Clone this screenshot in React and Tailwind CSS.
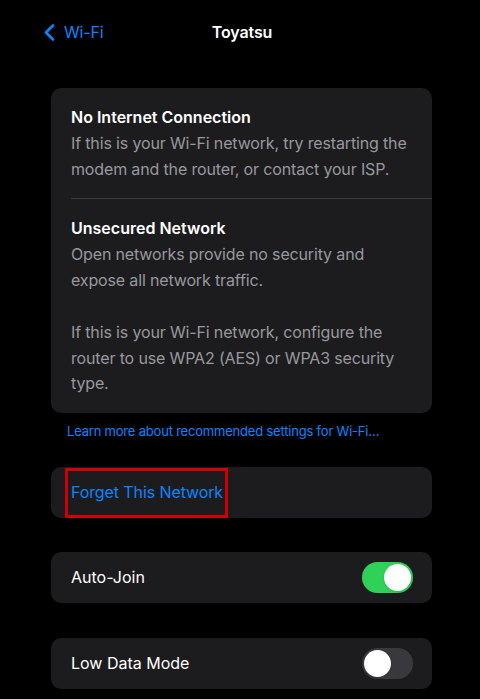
import { useState } from 'react';

const Toggle = ({ on, onChange }) => (
  <button
    onClick={() => onChange(!on)}
    className={`relative w-[51px] h-[31px] rounded-full transition-colors duration-200 ${
      on ? 'bg-[#30d158]' : 'bg-[#39393d]'
    }`}
  >
    <span
      className={`absolute top-[2px] w-[27px] h-[27px] rounded-full bg-white shadow transition-all duration-200 ${
        on ? 'left-[22px]' : 'left-[2px]'
      }`}
    />
  </button>
);

const App = () => {
  const [autoJoin, setAutoJoin] = useState(true);
  const [lowData, setLowData] = useState(false);

  return (
    <div
      className="min-h-[699px] w-[480px] bg-black text-white overflow-hidden"
      style={{ fontFamily: 'Inter, "Noto Sans", sans-serif' }}
    >
      {/* Nav bar */}
      <div className="relative h-[64px] flex items-center">
        <div className="flex items-center pl-[43px] text-[#0a84ff]">
          <svg width="13" height="17" viewBox="0 0 13 17" fill="none">
            <path d="M10 1.5 L3 8.5 L10 15.5" stroke="currentColor" strokeWidth="2.6" strokeLinecap="round" strokeLinejoin="round" />
          </svg>
          <span className="ml-[8px] text-[16px] tracking-[-0.2px] leading-none">Wi-Fi</span>
        </div>
        <div className="absolute left-0 right-0 top-0 h-[64px] flex items-center justify-center pl-[4px] pointer-events-none">
          <span className="text-[16px] tracking-[-0.1px] font-semibold leading-none">Toyatsu</span>
        </div>
      </div>

      <div className="ml-[51px] w-[381px] pt-[24px]">
        {/* Info card */}
        <div className="bg-[#1c1c1e] rounded-[10px] pl-[20px] pt-[15px] pb-[16px]">
          <div className="pr-[16px] pb-[16px]">
            <div className="text-[16px] font-semibold leading-[28px]">No Internet Connection</div>
            <p className="text-[16px] tracking-[-0.15px] leading-[25.5px] text-[#98989f]">
              If this is your Wi-Fi network, try restarting the modem and the router, or contact your ISP.
            </p>
          </div>
          <div className="h-px bg-[#38383a]" />
          <div className="pr-[16px] pt-[15px]">
            <div className="text-[16px] font-semibold leading-[28px]">Unsecured Network</div>
            <p className="text-[16px] tracking-[-0.15px] leading-[25.5px] text-[#98989f]">
              Open networks provide no security and expose all network traffic.
            </p>
            <p className="mt-[27px] text-[16px] tracking-[-0.15px] leading-[25.5px] text-[#98989f]">
              If this is your Wi-Fi network, configure the router to use WPA2 (AES) or WPA3 security type.
            </p>
          </div>
        </div>

        <div className="pl-[16px] pt-[9px] text-[13px] tracking-[-0.2px] leading-[18px] text-[#0a84ff]">
          Learn more about recommended settings for Wi-Fi…
        </div>

        {/* Forget */}
        <div className="relative mt-[27px] h-[51px] bg-[#1c1c1e] rounded-[10px] flex items-center pl-[20px]">
          <span className="text-[16px] tracking-[-0.1px] text-[#0a84ff]">Forget This Network</span>
          <div className="absolute left-[14px] top-[1px] w-[163px] h-[50px] border-[3px] border-[#d10000] pointer-events-none" />
        </div>

        {/* Auto-Join */}
        <div className="mt-[34px] h-[51px] bg-[#1c1c1e] rounded-[10px] flex items-center justify-between pl-[20px] pr-[19px]">
          <span className="text-[16px]">Auto-Join</span>
          <Toggle on={autoJoin} onChange={setAutoJoin} />
        </div>

        {/* Low Data Mode */}
        <div className="mt-[35px] h-[51px] bg-[#1c1c1e] rounded-[10px] flex items-center justify-between pl-[20px] pr-[19px]">
          <span className="text-[16px]">Low Data Mode</span>
          <Toggle on={lowData} onChange={setLowData} />
        </div>
      </div>
    </div>
  );
};

export default App;
